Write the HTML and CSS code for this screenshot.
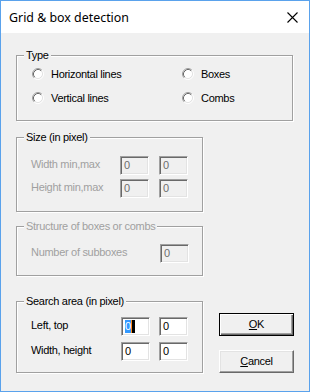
FILE: index.html
```html
<!DOCTYPE html>
<html>
<head>
<meta charset="utf-8">
<link rel="stylesheet" href="styles.css">
</head>
<body>
<div class="window">
  <div class="titlebar">
    <span class="title">Grid &amp; box detection</span>
    <span class="close"><svg width="11" height="11" viewBox="0 0 11 11"><path d="M0.5 0.5 L10.5 10.5 M10.5 0.5 L0.5 10.5" stroke="#000" stroke-width="1.1" fill="none"/></svg></span>
  </div>
  <div class="client">
    <div class="group type">
      <div class="legend">Type</div>
      <div class="radios">
        <div class="radio"><svg class="rb" width="12" height="12" viewBox="0 0 12 12"><circle cx="6" cy="6" r="4.5" fill="#fff"/><path d="M2.11 9.89 A5.5 5.5 0 0 1 9.89 2.11" stroke="#a0a0a0" fill="none"/><path d="M9.89 2.11 A5.5 5.5 0 0 1 2.11 9.89" stroke="#fff" fill="none"/><path d="M2.82 9.18 A4.5 4.5 0 0 1 9.18 2.82" stroke="#696969" fill="none"/><path d="M9.18 2.82 A4.5 4.5 0 0 1 2.82 9.18" stroke="#e3e3e3" fill="none"/></svg><span>Horizontal lines</span></div>
        <div class="radio"><svg class="rb" width="12" height="12" viewBox="0 0 12 12"><circle cx="6" cy="6" r="4.5" fill="#fff"/><path d="M2.11 9.89 A5.5 5.5 0 0 1 9.89 2.11" stroke="#a0a0a0" fill="none"/><path d="M9.89 2.11 A5.5 5.5 0 0 1 2.11 9.89" stroke="#fff" fill="none"/><path d="M2.82 9.18 A4.5 4.5 0 0 1 9.18 2.82" stroke="#696969" fill="none"/><path d="M9.18 2.82 A4.5 4.5 0 0 1 2.82 9.18" stroke="#e3e3e3" fill="none"/></svg><span>Boxes</span></div>
        <div class="radio"><svg class="rb" width="12" height="12" viewBox="0 0 12 12"><circle cx="6" cy="6" r="4.5" fill="#fff"/><path d="M2.11 9.89 A5.5 5.5 0 0 1 9.89 2.11" stroke="#a0a0a0" fill="none"/><path d="M9.89 2.11 A5.5 5.5 0 0 1 2.11 9.89" stroke="#fff" fill="none"/><path d="M2.82 9.18 A4.5 4.5 0 0 1 9.18 2.82" stroke="#696969" fill="none"/><path d="M9.18 2.82 A4.5 4.5 0 0 1 2.82 9.18" stroke="#e3e3e3" fill="none"/></svg><span>Vertical lines</span></div>
        <div class="radio"><svg class="rb" width="12" height="12" viewBox="0 0 12 12"><circle cx="6" cy="6" r="4.5" fill="#fff"/><path d="M2.11 9.89 A5.5 5.5 0 0 1 9.89 2.11" stroke="#a0a0a0" fill="none"/><path d="M9.89 2.11 A5.5 5.5 0 0 1 2.11 9.89" stroke="#fff" fill="none"/><path d="M2.82 9.18 A4.5 4.5 0 0 1 9.18 2.82" stroke="#696969" fill="none"/><path d="M9.18 2.82 A4.5 4.5 0 0 1 2.82 9.18" stroke="#e3e3e3" fill="none"/></svg><span>Combs</span></div>
      </div>
    </div>

    <div class="lower">
      <div class="leftcol">
        <div class="group size">
          <div class="legend">Size (in pixel)</div>
          <div class="rows size-rows">
            <div class="row"><span class="lbl w89 disabled">Width min,max</span><span class="edit disabled-edit">0</span><span class="edit disabled-edit">0</span></div>
            <div class="row"><span class="lbl w89 disabled">Height min,max</span><span class="edit disabled-edit">0</span><span class="edit disabled-edit">0</span></div>
          </div>
        </div>

        <div class="group structure">
          <div class="legend disabled">Structure of boxes or combs</div>
          <div class="rows struct-rows">
            <div class="row"><span class="lbl w129 disabled">Number of subboxes</span><span class="edit disabled-edit">0</span></div>
          </div>
        </div>

        <div class="group search">
          <div class="legend">Search area (in pixel)</div>
          <div class="rows search-rows">
            <div class="row"><span class="lbl w90">Left, top</span><span class="edit"><span class="sel">0</span><span class="caret"></span></span><span class="edit">0</span></div>
            <div class="row"><span class="lbl w90">Width, height</span><span class="edit">0</span><span class="edit">0</span></div>
          </div>
        </div>
      </div>

      <div class="buttons">
        <div class="btn default"><u>O</u>K</div>
        <div class="btn"><u>C</u>ancel</div>
      </div>
    </div>
  </div>
</div>
</body>
</html>
```
FILE: styles.css
```css
html, body {
  margin: 0;
  padding: 0;
  background: #f0f0f0;
}
* { box-sizing: border-box; }

.window {
  width: 310px;
  height: 392px;
  border: 1px solid #5aa2ec;
  background: #f0f0f0;
  display: flex;
  flex-direction: column;
  font-family: "Liberation Sans", Arial, sans-serif;
  font-size: 11px;
  letter-spacing: -0.3px;
  color: #000;
}

.titlebar {
  height: 32px;
  background: #fff;
  display: flex;
  align-items: center;
  padding-left: 8px;
  padding-right: 11px;
  flex: none;
}
.title {
  font-family: "Noto Sans", "Open Sans", sans-serif;
  font-size: 12.4px;
  letter-spacing: 0;
  color: #000;
  padding-top: 1px;
}
.close {
  margin-left: auto;
  display: flex;
  padding-top: 1px;
}

.client {
  flex: 1;
  display: flex;
  flex-direction: column;
  padding: 22px 0 0 15px;
}

.group {
  border: 1px solid #a0a0a0;
  box-shadow: inset 1px 1px 0 #fff, 1px 1px 0 #fff;
  flex: none;
}
.legend {
  display: table;
  background: #f0f0f0;
  padding: 0 2px;
  line-height: 13px;
  margin: -7px 0 -6px 7px;
  white-space: nowrap;
}
.disabled { color: #a0a0a0; }

.type {
  width: 277px;
  height: 66px;
}
.radios {
  display: grid;
  grid-template-columns: 150px 100px;
  grid-auto-rows: 14px;
  row-gap: 10px;
  padding: 11px 0 0 15px;
}
.radio {
  display: flex;
  align-items: center;
  gap: 7px;
  line-height: 13px;
  white-space: nowrap;
}
.rb { flex: none; }

.lower {
  display: flex;
  margin-top: 16px;
}
.leftcol {
  width: 187px;
  flex: none;
  display: flex;
  flex-direction: column;
}
.size { height: 75px; }
.structure { height: 50px; margin-top: 14px; }
.search { height: 72px; margin-top: 25px; }

.rows {
  display: flex;
  flex-direction: column;
  padding-left: 14px;
}
.size-rows { padding-top: 18px; gap: 4px; }
.struct-rows { padding-top: 17px; }
.search-rows { padding-top: 15px; gap: 6px; }
.row {
  display: flex;
  align-items: center;
  height: 19px;
}
.size-rows .edit + .edit { margin-left: 10px; }
.search-rows .edit + .edit { margin-left: 9px; }

.lbl {
  flex: none;
  white-space: nowrap;
  line-height: 13px;
  margin-top: -2px;
  overflow: visible;
}
.w89 { width: 89px; }
.w90 { width: 90px; }
.w129 { width: 129px; }

.edit {
  flex: none;
  width: 29px;
  height: 19px;
  border: 1px solid;
  border-color: #a0a0a0 #fff #fff #a0a0a0;
  box-shadow: inset 1px 1px 0 #696969, inset -1px -1px 0 #e3e3e3;
  background: #fff;
  padding: 2px 0 0 3px;
  line-height: 13px;
  display: flex;
  align-items: flex-start;
}
.disabled-edit {
  background: #f0f0f0;
  color: #6d6d6d;
}
.sel {
  background: #3399ff;
  color: #fff;
  display: inline-block;
  height: 13px;
}
.caret {
  display: inline-block;
  width: 4px;
  height: 13px;
  background: #000;
  border-left: 1px solid #ff8c1a;
}

.buttons {
  flex: none;
  padding: 176px 0 0 16px;
  display: flex;
  flex-direction: column;
  gap: 14px;
}
.btn {
  width: 75px;
  height: 23px;
  display: flex;
  align-items: center;
  justify-content: center;
  border: 1px solid;
  border-color: #fff #696969 #696969 #fff;
  box-shadow: inset -1px -1px 0 #a0a0a0, inset 1px 1px 0 #e3e3e3;
  background: #f0f0f0;
  line-height: 13px;
}
.btn.default {
  border-color: #000;
  box-shadow: inset 1px 1px 0 #fff, inset -1px -1px 0 #696969, inset -2px -2px 0 #a0a0a0;
}
```
